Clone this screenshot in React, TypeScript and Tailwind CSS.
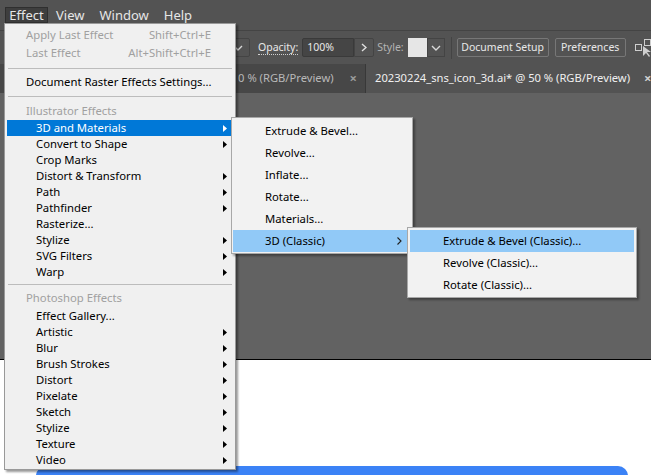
import React from "react";

const F = "font-['Noto_Sans',sans-serif]";

function Tri({ white }: { white?: boolean }) {
  return (
    <svg width="4" height="7" viewBox="0 0 4 7" className="block">
      <path d="M0 0 L4 3.5 L0 7 Z" fill={white ? "#ffffff" : "#000000"} />
    </svg>
  );
}

function Chev() {
  return (
    <svg width="5" height="8" viewBox="0 0 5 8" className="block">
      <path d="M0.5 0.5 L4 4 L0.5 7.5" fill="none" stroke="#202020" strokeWidth="1.1" />
    </svg>
  );
}

type Item = { label: string; sub?: boolean; hi?: boolean };

const illus: Item[] = [
  { label: "3D and Materials", sub: true, hi: true },
  { label: "Convert to Shape", sub: true },
  { label: "Crop Marks" },
  { label: "Distort & Transform", sub: true },
  { label: "Path", sub: true },
  { label: "Pathfinder", sub: true },
  { label: "Rasterize..." },
  { label: "Stylize", sub: true },
  { label: "SVG Filters", sub: true },
  { label: "Warp", sub: true },
];

const photo: Item[] = [
  { label: "Effect Gallery..." },
  { label: "Artistic", sub: true },
  { label: "Blur", sub: true },
  { label: "Brush Strokes", sub: true },
  { label: "Distort", sub: true },
  { label: "Pixelate", sub: true },
  { label: "Sketch", sub: true },
  { label: "Stylize", sub: true },
  { label: "Texture", sub: true },
  { label: "Video", sub: true },
];

function MainRow({ it }: { it: Item }) {
  return (
    <div
      className={`mx-[2px] h-[16px] flex items-center justify-between pl-[29px] pr-[6px] ${
        it.hi ? "bg-[#0078d7] text-white" : "text-black"
      }`}
    >
      <span className="leading-none">{it.label}</span>
      {it.sub && <Tri white={it.hi} />}
    </div>
  );
}

function Sep({ h }: { h: string }) {
  return (
    <div className={`${h} flex items-center mx-[3px]`}>
      <div className="h-px w-full bg-[#bcbcbc]" />
    </div>
  );
}

function ChevDown() {
  return (
    <svg width="10" height="6" viewBox="0 0 10 6">
      <path d="M1 1 L5 5 L9 1" fill="none" stroke="#d8d8d8" strokeWidth="1.4" />
    </svg>
  );
}

export default function App() {
  return (
    <div className={`relative w-[651px] h-[475px] overflow-hidden ${F} text-[11.3px]`}>
      {/* Menu bar */}
      <div className="h-[30px] bg-[#535353] flex items-start pt-[7px] pl-[5px] text-[13px] text-[#e6e6e6]">
        <div className="h-[16px] w-[43px] bg-[#3e3e3e] border border-[#2f2f2f] flex items-center justify-center leading-none">
          Effect
        </div>
        <div className="ml-[8px] h-[16px] flex items-center leading-none">View</div>
        <div className="ml-[15px] h-[16px] flex items-center leading-none">Window</div>
        <div className="ml-[15px] h-[16px] flex items-center leading-none">Help</div>
      </div>

      {/* Control bar */}
      <div className="h-[34px] bg-[#535353] border-t border-[#444444] flex items-center text-[10.5px] text-[#e8e8e8] whitespace-nowrap">
        <div className="shrink-0 ml-[222px] w-[28px] h-[19px] border border-[#444] rounded-[2px] flex items-center justify-end pr-[6px]">
          <ChevDown />
        </div>
        <span className="shrink-0 ml-[8px] border-b border-dotted border-[#d0d0d0] leading-[13px]">Opacity:</span>
        <div className="shrink-0 ml-[4px] flex h-[19px]">
          <div className="w-[52px] bg-[#454545] border border-[#3a3a3a] rounded-l-[2px] flex items-center pl-[4px]">
            100%
          </div>
          <div className="w-[20px] border border-[#444] rounded-r-[2px] flex items-center justify-center">
            <svg width="6" height="9" viewBox="0 0 6 9">
              <path d="M1 1 L5 4.5 L1 8" fill="none" stroke="#e0e0e0" strokeWidth="1.4" />
            </svg>
          </div>
        </div>
        <span className="shrink-0 ml-[3px] text-[#b4b4b4]">Style:</span>
        <div className="shrink-0 ml-[4px] flex h-[19px]">
          <div className="w-[19px] bg-[#e6e6e6]" />
          <div className="w-[18px] border border-[#444] flex items-center justify-center">
            <ChevDown />
          </div>
        </div>
        <div className="shrink-0 ml-[6px] w-px h-[22px] bg-[#444]" />
        <div className="shrink-0 ml-[5px] w-[92px] h-[19px] border border-[#777] rounded-[2px] flex items-center justify-center">
          Document Setup
        </div>
        <div className="shrink-0 ml-[6px] w-[71px] h-[19px] border border-[#777] rounded-[2px] flex items-center justify-center">
          Preferences
        </div>
        <div className="shrink-0 ml-[8px]">
          <svg width="20" height="20" viewBox="0 0 20 20">
            <rect x="1.5" y="6.5" width="6" height="6" fill="none" stroke="#cfcfcf" />
            <rect x="10.5" y="1.5" width="6" height="6" fill="none" stroke="#cfcfcf" />
            <path d="M9 8 L9 18 L12 15 L15 19 L16 18 L13 14 L17 14 Z" fill="#cfcfcf" />
          </svg>
        </div>
      </div>

      {/* Tabs */}
      <div className="h-[29px] bg-[#424242] flex text-[11.2px] whitespace-nowrap">
        <div className="shrink-0 w-[366px] flex items-center justify-end overflow-hidden bg-[#474747] text-[#b9b9b9] border-r border-[#383838]">
          <span>0 % (RGB/Preview)</span>
          <span className="ml-[16px] mr-[8px] text-[13px] font-bold text-[#9a9a9a]">×</span>
        </div>
        <div className="flex-1 min-w-0 flex items-center overflow-hidden bg-[#535353] text-[#f0f0f0] pl-[9px]">
          <span>20230224_sns_icon_3d.ai* @ 50 % (RGB/Preview)</span>
          <span className="ml-[14px] text-[13px] font-bold text-[#d0d0d0]">×</span>
        </div>
      </div>

      {/* Canvas */}
      <div className="h-[267px] bg-[#626262] border-b border-black" />
      <div className="h-[114px] bg-white pt-[106px]">
        <div className="ml-[36px] w-[592px] h-[20px] bg-[#3b82f6] rounded-t-[10px]" />
      </div>

      {/* Main Effect menu */}
      <div className="absolute left-[4px] top-[23px] w-[232px] h-[447px] bg-[#f0f0f0] border border-[#999999] shadow-[2px_2px_2px_rgba(0,0,0,0.4)] pt-[2px]">
        <div className="mx-[2px] h-[18px] flex items-center justify-between pl-[19px] pr-[22px] text-[#a0a0a0]">
          <span>Apply Last Effect</span>
          <span>Shift+Ctrl+E</span>
        </div>
        <div className="mx-[2px] h-[18px] flex items-center justify-between pl-[19px] pr-[22px] text-[#a0a0a0]">
          <span>Last Effect</span>
          <span>Alt+Shift+Ctrl+E</span>
        </div>
        <Sep h="h-[12px]" />
        <div className="mx-[2px] h-[16px] flex items-center pl-[19px] text-black">
          Document Raster Effects Settings...
        </div>
        <Sep h="h-[12px]" />
        <div className="mx-[2px] h-[18px] flex items-center pl-[19px] text-[#a0a0a0]">
          Illustrator Effects
        </div>
        {illus.map((it, i) => (
          <MainRow key={"i" + i} it={it} />
        ))}
        <Sep h="h-[8px]" />
        <div className="mx-[2px] h-[20px] flex items-center pl-[19px] text-[#a0a0a0]">
          Photoshop Effects
        </div>
        {photo.map((it, i) => (
          <MainRow key={"p" + i} it={it} />
        ))}
      </div>

      {/* 3D and Materials submenu */}
      <div className="absolute left-[231px] top-[117px] w-[182px] h-[137px] bg-[#f2f2f2] border border-[#a8a8a8] shadow-[2px_2px_2px_rgba(0,0,0,0.35)] pt-[2px] text-black">
        {["Extrude & Bevel...", "Revolve...", "Inflate...", "Rotate...", "Materials..."].map((t) => (
          <div key={t} className="ml-[1px] mr-[2px] h-[22px] flex items-center pl-[32px]">
            {t}
          </div>
        ))}
        <div className="ml-[1px] mr-[2px] h-[22px] flex items-center justify-between pl-[32px] pr-[8px] bg-[#91c9f7]">
          <span>3D (Classic)</span>
          <Chev />
        </div>
      </div>

      {/* 3D Classic submenu */}
      <div className="absolute left-[407px] top-[227px] w-[230px] h-[71px] bg-[#f2f2f2] border border-[#a8a8a8] shadow-[2px_2px_2px_rgba(0,0,0,0.35)] pt-[2px] text-black">
        <div className="mx-[2px] h-[22px] flex items-center pl-[33px] bg-[#91c9f7]">Extrude &amp; Bevel (Classic)...</div>
        <div className="mx-[2px] h-[22px] flex items-center pl-[33px]">Revolve (Classic)...</div>
        <div className="mx-[2px] h-[22px] flex items-center pl-[33px]">Rotate (Classic)...</div>
      </div>
    </div>
  );
}
